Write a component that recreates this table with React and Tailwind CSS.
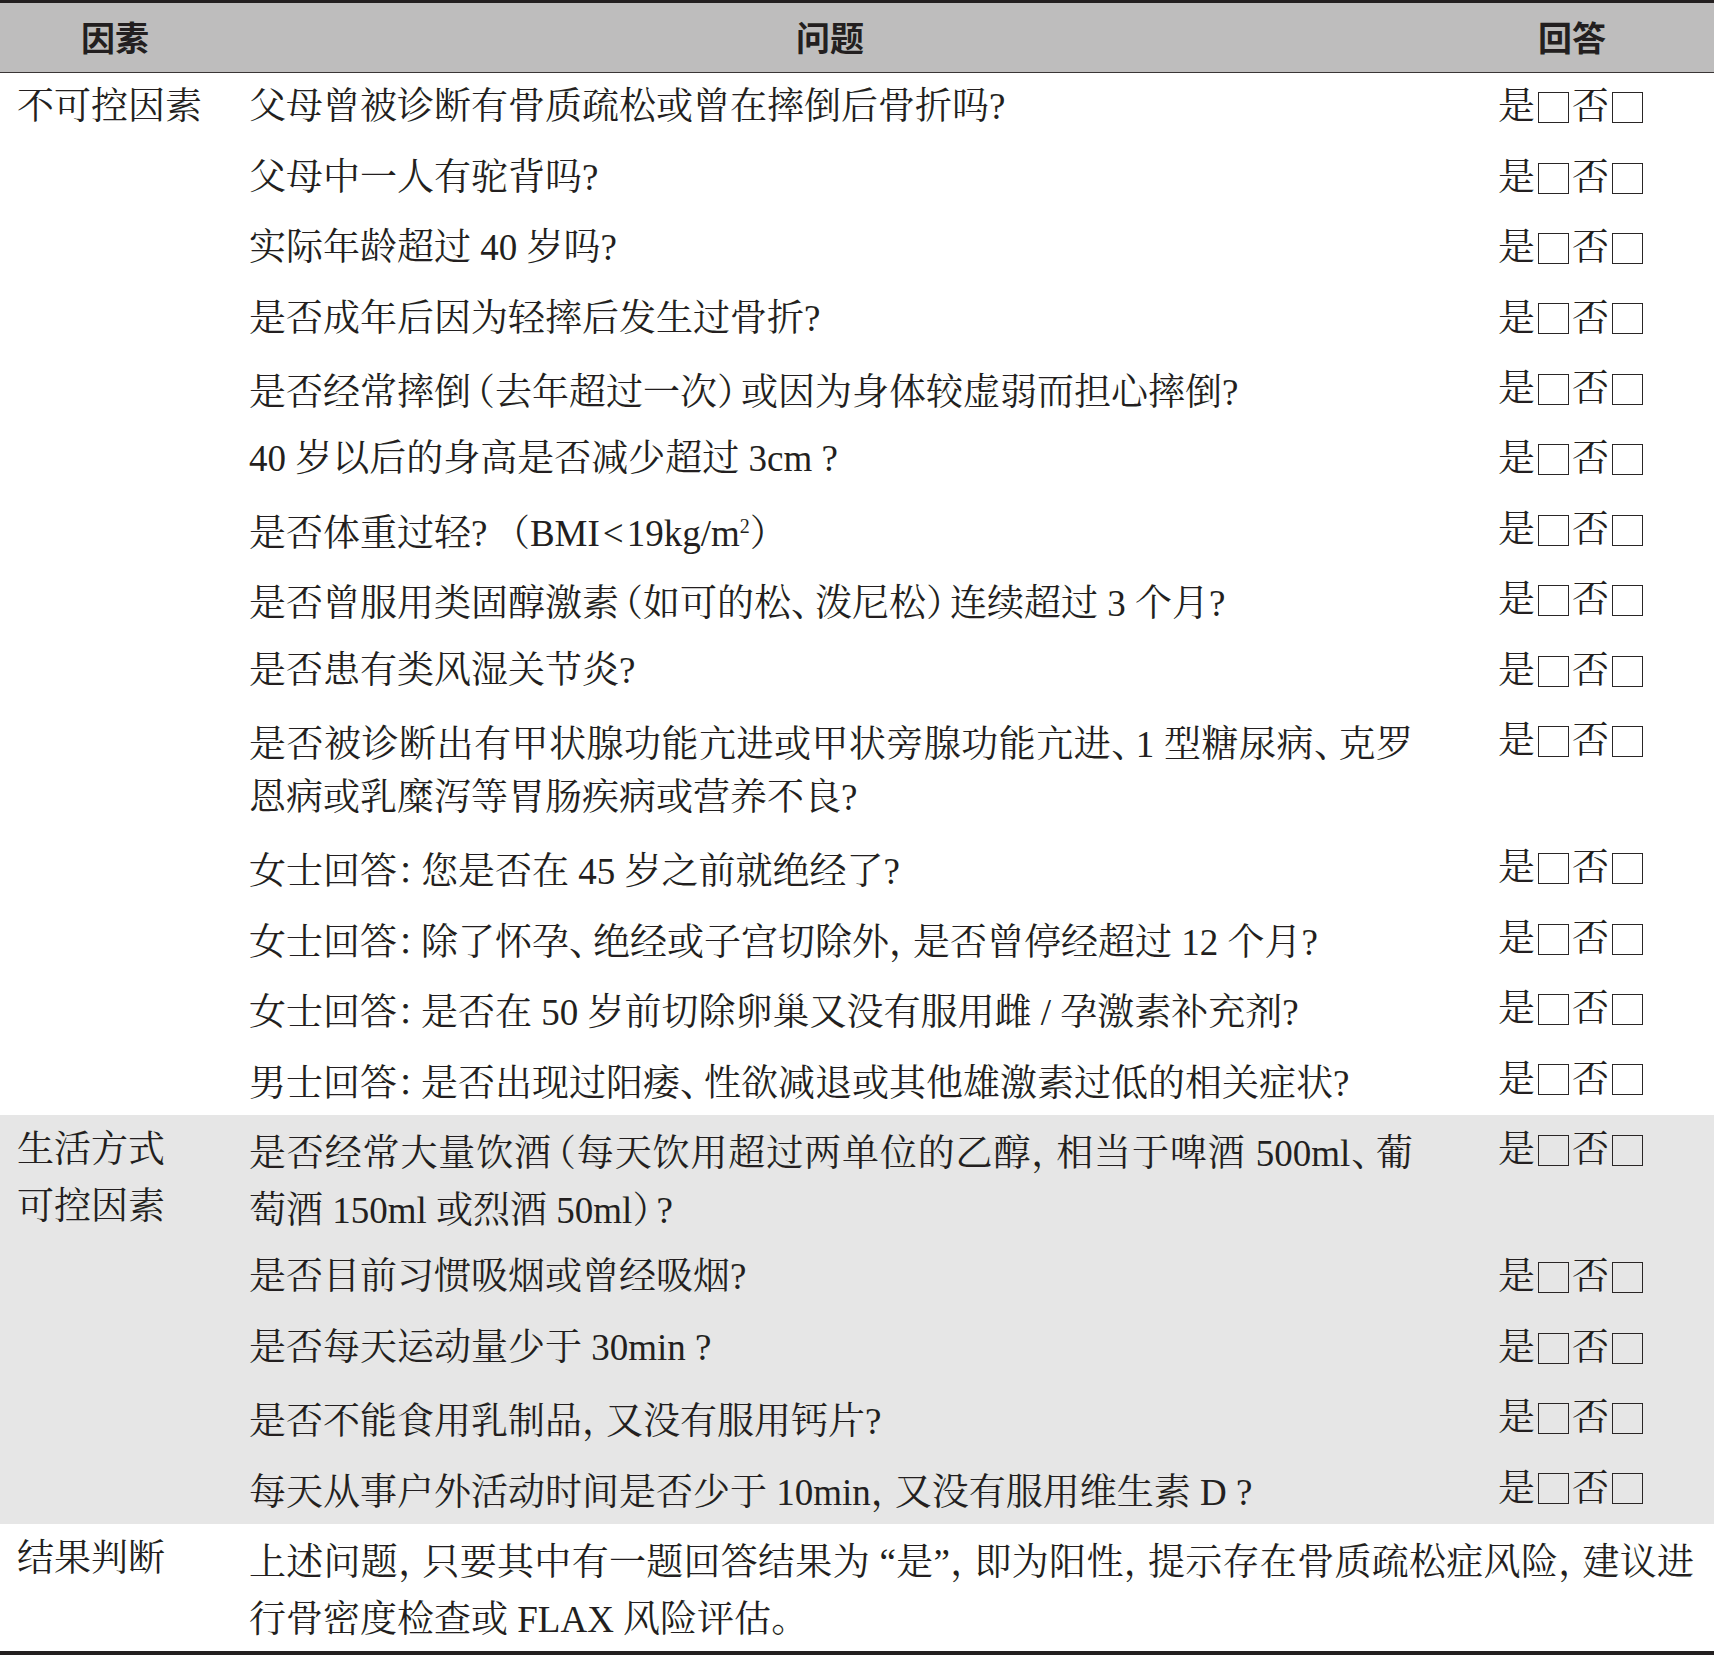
import React from "react";

const LEFT_P = "，、：）。；";
const RIGHT_P = "（";
const CJK = "font-['Noto_Serif_CJK_SC','Noto_Sans_CJK_SC',serif]";

function fmt(s) {
  const parts = s.split(/([，、：（）。；])/);
  return parts.map((p, i) => {
    if (!p) return null;
    if (LEFT_P.includes(p)) {
      return (
        <span key={i} className={`${CJK} mr-[-13px]`}>
          {p}
        </span>
      );
    }
    if (RIGHT_P.includes(p)) {
      return (
        <span key={i} className={`${CJK} ml-[-13px]`}>
          {p}
        </span>
      );
    }
    return <React.Fragment key={i}>{p}</React.Fragment>;
  });
}

const Box = () => (
  <span className="mx-[3px] h-[31px] w-[31px] shrink-0 border-[1.5px] border-[#2a2626]" />
);

const Answer = () => (
  <div className="flex h-[56.8px] items-center justify-center whitespace-nowrap">
    <span>是</span>
    <Box />
    <span>否</span>
    <Box />
  </div>
);

const J1 = "w-[1164px]";

const rowsA = [
  ["父母曾被诊断有骨质疏松或曾在摔倒后骨折吗?"],
  ["父母中一人有驼背吗?"],
  ["实际年龄超过 40 岁吗?"],
  ["是否成年后因为轻摔后发生过骨折?"],
  ["是否经常摔倒（去年超过一次）或因为身体较虚弱而担心摔倒?"],
  ["40 岁以后的身高是否减少超过 3cm ?"],
  [
    <>
      是否体重过轻?　{fmt("（")}BMI<span className="mx-[3px]">&lt;</span>19kg/m
      <span className="relative -top-[13px] text-[20px] leading-none">2</span>
      {fmt("）")}
    </>,
  ],
  ["是否曾服用类固醇激素（如可的松、泼尼松）连续超过 3 个月?"],
  ["是否患有类风湿关节炎?"],
  [
    { t: "是否被诊断出有甲状腺功能亢进或甲状旁腺功能亢进、1 型糖尿病、克罗", w: J1 },
    "恩病或乳糜泻等胃肠疾病或营养不良?",
  ],
  ["女士回答：您是否在 45 岁之前就绝经了?"],
  ["女士回答：除了怀孕、绝经或子宫切除外，是否曾停经超过 12 个月?"],
  ["女士回答：是否在 50 岁前切除卵巢又没有服用雌 / 孕激素补充剂?"],
  ["男士回答：是否出现过阳痿、性欲减退或其他雄激素过低的相关症状?"],
];

const rowsB = [
  [
    { t: "是否经常大量饮酒（每天饮用超过两单位的乙醇，相当于啤酒 500ml、葡", w: J1 },
    "萄酒 150ml 或烈酒 50ml）?",
  ],
  ["是否目前习惯吸烟或曾经吸烟?"],
  ["是否每天运动量少于 30min ?"],
  ["是否不能食用乳制品，又没有服用钙片?"],
  ["每天从事户外活动时间是否少于 10min，又没有服用维生素 D ?"],
];

const cellPad = "py-[6.82px]";

function Line({ l }) {
  if (l && typeof l === "object" && l.t) {
    return (
      <div
        className={`h-[56.8px] whitespace-nowrap text-justify [text-align-last:justify] ${l.w}`}
      >
        {fmt(l.t)}
      </div>
    );
  }
  return (
    <div className="h-[56.8px] whitespace-nowrap">
      {typeof l === "string" ? fmt(l) : l}
    </div>
  );
}

function Row({ first, lines, gray }) {
  return (
    <div className={`flex ${gray ? "bg-[#e6e6e6]" : ""}`}>
      <div className={`w-[230px] shrink-0 pl-[17px] ${cellPad}`}>
        {first ? first.map((l, i) => <Line key={i} l={l} />) : null}
      </div>
      <div className={`w-[1200px] shrink-0 pl-[19px] ${cellPad}`}>
        {lines.map((l, i) => (
          <Line key={i} l={l} />
        ))}
      </div>
      <div className={`flex-1 ${cellPad}`}>
        <Answer />
      </div>
    </div>
  );
}

export default function App() {
  return (
    <div className="w-[1714px] h-[1655px] bg-white">
      <div className="w-[1714px] text-[37px] leading-[56.8px] text-[#231f20] border-t-[3px] border-b-[4px] border-[#231f20]">
        <div className="flex h-[69.5px] items-center bg-[#bebdbd] border-b-[1.5px] border-[#3a3636] font-['Noto_Sans_CJK_SC',sans-serif] font-bold text-[34px] pt-[1px]">
          <div className="w-[230px] text-center">因素</div>
          <div className="w-[1200px] text-center">问题</div>
          <div className="flex-1 text-center">回答</div>
        </div>
        <div className="font-['Liberation_Serif','Noto_Serif_CJK_SC','Noto_Sans_CJK_SC',serif]">
          {rowsA.map((lines, i) => (
            <Row key={i} first={i === 0 ? ["不可控因素"] : null} lines={lines} />
          ))}
          {rowsB.map((lines, i) => (
            <Row
              key={i}
              gray
              first={i === 0 ? ["生活方式", "可控因素"] : null}
              lines={lines}
            />
          ))}
          <div className="flex">
            <div className={`w-[230px] shrink-0 pl-[17px] ${cellPad}`}>
              <Line l="结果判断" />
            </div>
            <div className={`flex-1 pl-[19px] ${cellPad}`}>
              <Line
                l={{
                  t: "上述问题，只要其中有一题回答结果为 “是”，即为阳性，提示存在骨质疏松症风险，建议进",
                  w: "w-[1445px]",
                }}
              />
              <Line l="行骨密度检查或 FLAX 风险评估。" />
            </div>
          </div>
        </div>
      </div>
    </div>
  );
}
